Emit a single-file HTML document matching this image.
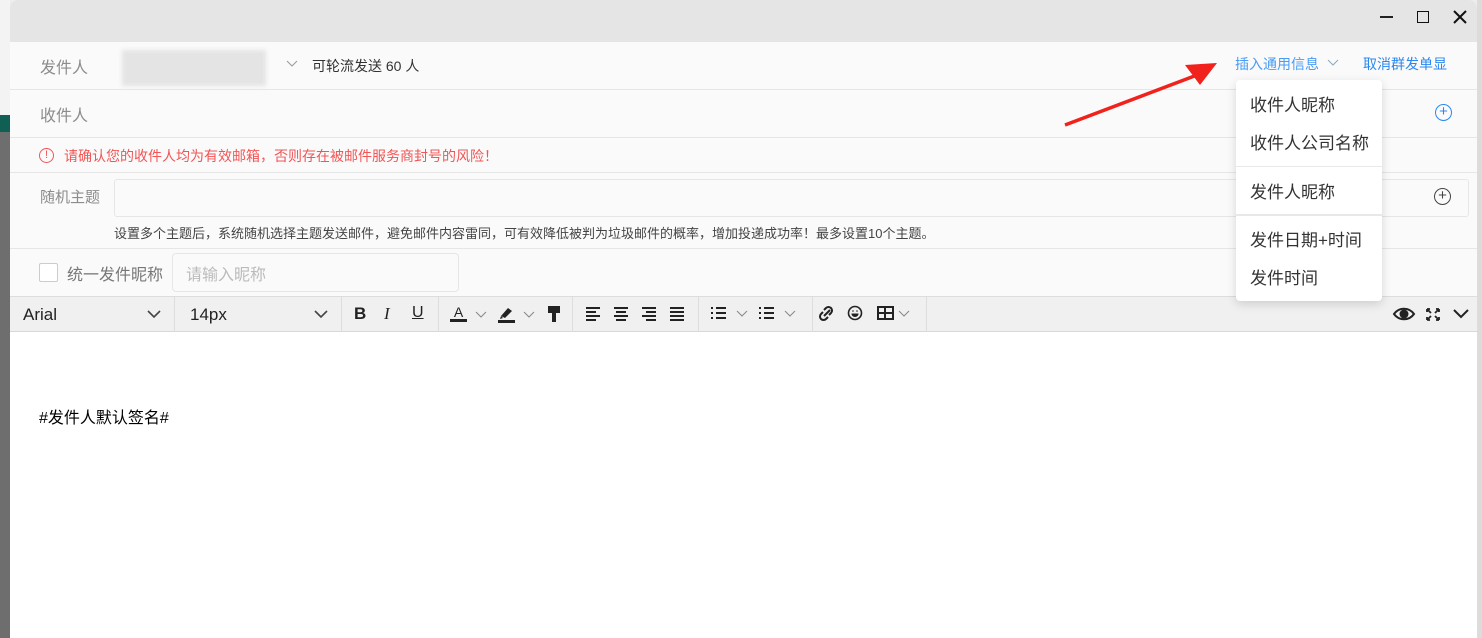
<!DOCTYPE html>
<html><head><meta charset="utf-8"><style>
*{box-sizing:border-box;margin:0;padding:0}
body{width:1482px;height:638px;overflow:hidden;background:#ededed;font-family:"Liberation Sans","Noto Sans CJK SC",sans-serif;position:relative}
.abs{position:absolute}
.win{left:10px;top:0;width:1467px;height:638px;background:#fafafa;border-radius:8px 8px 0 0;overflow:hidden}
.title{left:0;top:0;width:100%;height:42px;background:#e5e5e5}
.hl{position:absolute;left:0;width:100%;height:1px;background:#e6e6e6}
.lbl{position:absolute;color:#8c8c8c;font-size:15px}
.t{position:absolute;white-space:nowrap}
.dd{left:1226px;top:80px;width:146px;height:221px;background:#fff;border-radius:4px;box-shadow:0 3px 10px rgba(0,0,0,.15)}
.dd div{position:absolute;left:14px;font-size:17px;color:#333}
svg.cv{position:absolute}
</style></head><body>
<div class="abs" style="left:0;top:0;width:10px;height:115px;background:#f3f3f3"></div>
<div class="abs" style="left:0;top:115px;width:10px;height:17px;background:#0f5f55"></div>
<div class="abs" style="left:0;top:132px;width:10px;height:506px;background:#6e6e6e"></div>
<div class="abs" style="left:1477px;top:0;width:5px;height:638px;background:#dcdcdc"></div>
<div class="abs win">
 <div class="abs title"></div>
 <div class="abs" style="left:1370px;top:16px;width:13px;height:2px;background:#222"></div>
 <div class="abs" style="left:1407px;top:11px;width:12px;height:12px;border:1.5px solid #111"></div>
 <svg class="cv" style="left:1443px;top:10px" width="14" height="14" stroke="#111" stroke-width="2"><path d="M1 1l12 12M13 1L1 13"/></svg>
 <div class="hl" style="top:89px"></div>
 <div class="hl" style="top:137px"></div>
 <div class="hl" style="top:172px"></div>
 <div class="hl" style="top:248px"></div>
 <div class="hl" style="top:296px;background:#ddd"></div>
 <div class="lbl" style="left:30px;top:54px;font-size:16px">发件人</div>
 <div class="abs" style="left:112px;top:50px;width:144px;height:36px;background:#e4e4e4;filter:blur(2px)"></div>
 <svg class="cv" style="left:276px;top:60px" width="12" height="8" stroke="#999" fill="none"><path d="M1 1l5 5 5-5"/></svg>
 <div class="t" style="left:302px;top:56px;font-size:14px;color:#333">可轮流发送 60 人</div>
 <div class="t" style="left:1225px;top:54px;font-size:14px;color:#4a9cf5">插入通用信息</div>
 <svg class="cv" style="left:1317px;top:59px" width="12" height="8" stroke="#8ab" fill="none"><path d="M1 1l5 5 5-5"/></svg>
 <div class="t" style="left:1353px;top:54px;font-size:14px;color:#2b88f0">取消群发单显</div>
 <div class="lbl" style="left:30px;top:102px;font-size:16px">收件人</div>
 <div class="abs" style="left:1425px;top:104px;width:17px;height:17px;border:1.5px solid #2b88f0;border-radius:50%;color:#2b88f0;font-size:15px;line-height:13px;text-align:center">+</div>
 <div class="abs" style="left:29px;top:148px;width:15px;height:15px;border:1.3px solid #f25555;border-radius:50%;color:#f25555;font-size:11px;line-height:12px;text-align:center">!</div>
 <div class="t" style="left:54px;top:146px;font-size:14px;color:#f25555">请确认您的收件人均为有效邮箱，否则存在被邮件服务商封号的风险！</div>
 <div class="lbl" style="left:30px;top:186px">随机主题</div>
 <div class="abs" style="left:104px;top:179px;width:1355px;height:38px;border:1px solid #e6e6e6;border-radius:3px;background:#fafafa"></div>
 <div class="abs" style="left:1424px;top:188px;width:17px;height:17px;border:1.3px solid #444;border-radius:50%;color:#444;font-size:15px;line-height:13px;text-align:center">+</div>
 <div class="t" style="left:104px;top:223px;font-size:13px;color:#444">设置多个主题后，系统随机选择主题发送邮件，避免邮件内容雷同，可有效降低被判为垃圾邮件的概率，增加投递成功率！最多设置10个主题。</div>
 <div class="abs" style="left:29px;top:263px;width:19px;height:19px;border:1px solid #ccc;border-radius:2px;background:#fff"></div>
 <div class="t" style="left:57px;top:261px;font-size:16px;color:#777">统一发件昵称</div>
 <div class="abs" style="left:162px;top:253px;width:287px;height:39px;border:1px solid #e6e6e6;border-radius:4px"></div>
 <div class="t" style="left:176px;top:261px;font-size:16px;color:#bbb">请输入昵称</div>
 <div class="abs" style="left:0;top:297px;width:100%;height:35px;background:#f0f0f0;border-bottom:1px solid #d8d8d8"></div>
 <div class="abs" style="left:164px;top:297px;width:1px;height:35px;background:#ddd"></div>
 <div class="abs" style="left:331px;top:297px;width:1px;height:35px;background:#ddd"></div>
 <div class="abs" style="left:428px;top:297px;width:1px;height:35px;background:#ddd"></div>
 <div class="abs" style="left:562px;top:297px;width:1px;height:35px;background:#ddd"></div>
 <div class="abs" style="left:688px;top:297px;width:1px;height:35px;background:#ddd"></div>
 <div class="abs" style="left:802px;top:297px;width:1px;height:35px;background:#ddd"></div>
 <div class="abs" style="left:916px;top:297px;width:1px;height:35px;background:#ddd"></div>
 <div class="t" style="left:13px;top:305px;font-size:17px;color:#222">Arial</div>
 <svg class="cv" style="left:137px;top:310px" width="14" height="9" stroke="#444" stroke-width="1.6" fill="none"><path d="M1 1l6 6 6-6"/></svg>
 <div class="t" style="left:180px;top:305px;font-size:17px;color:#222">14px</div>
 <svg class="cv" style="left:304px;top:310px" width="14" height="9" stroke="#444" stroke-width="1.6" fill="none"><path d="M1 1l6 6 6-6"/></svg>
 <div class="t" style="left:344px;top:304px;font-size:17px;font-weight:bold;color:#222">B</div>
 <div class="t" style="left:374px;top:304px;font-size:17px;font-style:italic;font-family:'Liberation Serif';color:#222">I</div>
 <div class="t" style="left:402px;top:304px;font-size:16px;text-decoration:underline;color:#222">U</div>
 <div class="t" style="left:440px;top:305px;font-size:14px;color:#222;border-bottom:3px solid #222;line-height:14px;width:17px;text-align:center">A</div>
 <svg class="cv" style="left:465px;top:311px" width="12" height="7" stroke="#888" fill="none"><path d="M1 1l5 5 5-5"/></svg>
 <svg class="cv" style="left:487px;top:305px" width="20" height="18"><path d="M4 11l7-8 4 3-7 7z M3 14l3-1-2-2z" fill="#222"/><rect x="1" y="15" width="17" height="3" fill="#222"/></svg>
 <svg class="cv" style="left:513px;top:311px" width="12" height="7" stroke="#888" fill="none"><path d="M1 1l5 5 5-5"/></svg>
 <div class="abs" style="left:538px;top:306px;width:12px;height:7px;background:#222"></div>
 <div class="abs" style="left:542px;top:313px;width:4px;height:9px;background:#222"></div>
 <svg class="abs" style="left:574px;top:305px" width="110" height="16" stroke="#222" stroke-width="2">
  <path d="M2 3h14M2 7h10M2 11h14M2 15h10"/><path d="M30 3h14M32 7h10M30 11h14M32 15h10"/><path d="M58 3h14M62 7h10M58 11h14M62 15h10"/><path d="M86 3h14M86 7h14M86 11h14M86 15h14"/></svg>
 <svg class="abs" style="left:700px;top:305px" width="100" height="16" stroke="#222" stroke-width="2" fill="none">
  <path d="M6 3h10M6 8h10M6 13h10M1 3h2M1 8h2M1 13h2"/><path d="M27 6l5 5 5-5" stroke="#888" stroke-width="1"/>
  <path d="M54 3h10M54 8h10M54 13h10M49 3h2M49 8h2M49 13h2" /><path d="M75 6l5 5 5-5" stroke="#888" stroke-width="1"/></svg>
 <svg class="abs" style="left:808px;top:304px" width="110" height="18" stroke="#222" stroke-width="2" fill="none">
  <path d="M6 12l6-6M5 8l-2 2a3 3 0 0 0 5 5l2-2M11 11l2-2a3 3 0 0 0-5-5l-2 2"/>
  <circle cx="37" cy="9" r="6.5" stroke-width="1.6"/><circle cx="35" cy="7" r="0.8" fill="#222" stroke="none"/><circle cx="39" cy="7" r="0.8" fill="#222" stroke="none"/><path d="M34 10a3 2.5 0 0 0 6 0z" fill="#222" stroke-width="1"/>
  <rect x="60" y="3" width="15" height="12" stroke-width="2"/><path d="M60 9h15M67 3v12"/><path d="M81 7l5 5 5-5" stroke="#888" stroke-width="1"/></svg>
 <svg class="abs" style="left:1382px;top:305px" width="80" height="18" fill="none" stroke="#222" stroke-width="2">
  <path d="M2 9c5-7 15-7 20 0c-5 7-15 7-20 0z"/><circle cx="12" cy="9" r="3.5" fill="#222"/>
  <path d="M35 4l4 4M35 4h3M35 4v3M47 4l-4 4M47 4h-3M47 4v3M35 15l4-4M35 15h3M35 15v-3M47 15l-4-4M47 15h-3M47 15v-3" stroke-width="1.8"/>
  <path d="M62 5l7 7 7-7"/></svg>
 <div class="abs" style="left:0;top:332px;width:100%;height:306px;background:#fff"></div>
 <div class="t" style="left:29px;top:404px;font-size:16px;color:#000">#发件人默认签名#</div>
 <div class="abs dd">
  <div style="top:11px">收件人昵称</div>
  <div style="top:49px">收件人公司名称</div>
  <div style="left:0;top:86px;width:100%;height:1px;background:#e8e8e8"></div>
  <div style="top:98px">发件人昵称</div>
  <div style="left:0;top:134px;width:100%;height:2px;background:#e8e8e8"></div>
  <div style="top:146px">发件日期+时间</div>
  <div style="top:184px">发件时间</div>
 </div>
</div>
<svg class="abs" style="left:1060px;top:55px" width="165" height="75"><path d="M5 70L145 17" stroke="#f0221b" stroke-width="3.5"/><path d="M157 8L125 10L140 30z" fill="#f0221b"/></svg>
</body></html>
